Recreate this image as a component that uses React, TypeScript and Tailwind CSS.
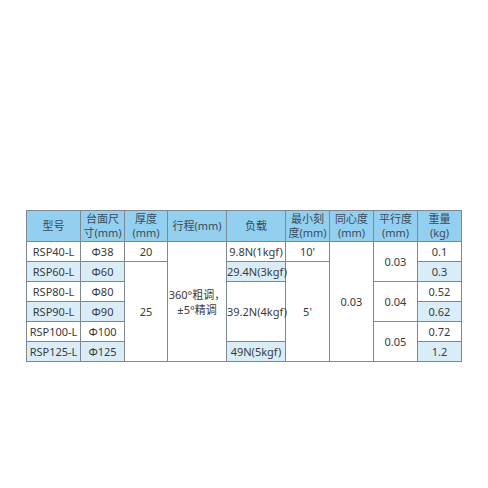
import React from "react";

const B = "border border-[#7f8890]";
const blue = "bg-[#d9edf9]";
const td = `${B} text-center align-middle p-0 leading-[14px]`;

export default function App() {
  return (
    <div className="w-[488px] h-[488px] bg-white pt-[210px] pl-[26px]" style={{ fontFamily: '"Noto Sans", "Noto Sans CJK SC", sans-serif' }}>
      <table className="border-collapse table-fixed w-[435px] text-[11px] text-[#3a3a3a]">
        <colgroup>
          <col className="w-[54px]" />
          <col className="w-[44px]" />
          <col className="w-[43px]" />
          <col className="w-[59px]" />
          <col className="w-[59px]" />
          <col className="w-[44px]" />
          <col className="w-[44px]" />
          <col className="w-[44px]" />
          <col className="w-[44px]" />
        </colgroup>
        <thead>
          <tr className="h-[31px] bg-[#93d0ef] text-[#3b4a5c]">
            <th className={`${td} font-normal`}>型号</th>
            <th className={`${td} font-normal`}>台面尺<br />寸(mm)</th>
            <th className={`${td} font-normal`}>厚度<br />(mm)</th>
            <th className={`${td} font-normal`}>行程(mm)</th>
            <th className={`${td} font-normal`}>负载</th>
            <th className={`${td} font-normal`}>最小刻<br />度(mm)</th>
            <th className={`${td} font-normal`}>同心度<br />(mm)</th>
            <th className={`${td} font-normal`}>平行度<br />(mm)</th>
            <th className={`${td} font-normal`}>重量<br />(kg)</th>
          </tr>
        </thead>
        <tbody>
          <tr className="h-[20px]">
            <td className={td}>RSP40-L</td>
            <td className={td}>Φ38</td>
            <td className={td}>20</td>
            <td className={td} rowSpan={6}>
              <div className="leading-[15px]">360°粗调，<br />±5°精调</div>
            </td>
            <td className={td}>9.8N(1kgf)</td>
            <td className={td}>10'</td>
            <td className={td} rowSpan={6}>0.03</td>
            <td className={td} rowSpan={2}>0.03</td>
            <td className={td}>0.1</td>
          </tr>
          <tr className="h-[20px]">
            <td className={`${td} ${blue}`}>RSP60-L</td>
            <td className={`${td} ${blue}`}>Φ60</td>
            <td className={td} rowSpan={5}>25</td>
            <td className={`${td} ${blue}`}>29.4N(3kgf)</td>
            <td className={td} rowSpan={5}>5'</td>
            <td className={`${td} ${blue}`}>0.3</td>
          </tr>
          <tr className="h-[20px]">
            <td className={td}>RSP80-L</td>
            <td className={td}>Φ80</td>
            <td className={td} rowSpan={3}>39.2N(4kgf)</td>
            <td className={td} rowSpan={2}>0.04</td>
            <td className={td}>0.52</td>
          </tr>
          <tr className="h-[20px]">
            <td className={`${td} ${blue}`}>RSP90-L</td>
            <td className={`${td} ${blue}`}>Φ90</td>
            <td className={`${td} ${blue}`}>0.62</td>
          </tr>
          <tr className="h-[20px]">
            <td className={td}>RSP100-L</td>
            <td className={td}>Φ100</td>
            <td className={td} rowSpan={2}>0.05</td>
            <td className={td}>0.72</td>
          </tr>
          <tr className="h-[20px]">
            <td className={`${td} ${blue}`}>RSP125-L</td>
            <td className={`${td} ${blue}`}>Φ125</td>
            <td className={`${td} ${blue}`}>49N(5kgf)</td>
            <td className={`${td} ${blue}`}>1.2</td>
          </tr>
        </tbody>
      </table>
    </div>
  );
}
